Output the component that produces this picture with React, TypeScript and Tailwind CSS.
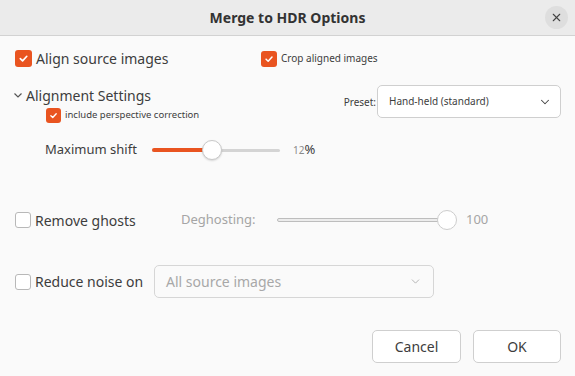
import { ChevronDown, X } from 'lucide-react';

function Check({ on, size = 17 }: { on: boolean; size?: number }) {
  if (on)
    return (
      <div
        className="flex items-center justify-center rounded-[3px] bg-[#e95420] shrink-0"
        style={{ width: size, height: size }}
      >
        <svg width={size - 6} height={size - 6} viewBox="0 0 12 12" fill="none">
          <path d="M2.5 6.2 L5 8.6 L9.6 3.6" stroke="white" strokeWidth="1.8" strokeLinecap="round" strokeLinejoin="round" />
        </svg>
      </div>
    );
  return (
    <div
      className="rounded-[3px] border border-[#b8b8b8] bg-white shrink-0"
      style={{ width: size, height: size }}
    />
  );
}

export default function App() {
  return (
    <div className="w-[575px] h-[376px] bg-[#fafafa] text-[#3d3d3d] font-['Noto_Sans','Open_Sans',sans-serif] overflow-hidden">
      <div className="h-[36px] bg-[#ebebeb] border-b border-[#d2d2d2] flex items-center justify-center relative">
        <span className="text-[14px] font-bold text-[#333]">Merge to HDR Options</span>
        <div className="absolute right-[7px] top-[6px] w-[23px] h-[23px] rounded-full bg-[#dedede] flex items-center justify-center">
          <X className="w-[13px] h-[13px] text-[#444]" strokeWidth={2} />
        </div>
      </div>

      <div className="pl-[15px] pr-[14px]">
        {/* row 1 */}
        <div className="mt-[14px] h-[17px] flex items-center">
          <div className="w-[246px] flex items-center gap-[4px]">
            <Check on />
            <span className="text-[14px]">Align source images</span>
          </div>
          <div className="flex items-center gap-[4px]">
            <Check on size={16} />
            <span className="text-[10px]">Crop aligned images</span>
          </div>
        </div>

        {/* row 2 */}
        <div className="mt-[19px] flex">
          <div className="flex-1">
            <div className="flex items-center h-[18px]">
              <svg width="10" height="10" viewBox="0 0 10 10" className="mr-[3px] -ml-[2px]">
                <path d="M1.5 3.5 L5 7 L8.5 3.5" stroke="#555" strokeWidth="1.2" fill="none" />
              </svg>
              <span className="text-[14px]">Alignment Settings</span>
            </div>
            <div className="mt-[4px] ml-[31px] flex items-center gap-[4px]">
              <Check on size={15} />
              <span className="text-[9.5px]">include perspective correction</span>
            </div>
          </div>
          <div className="flex items-center h-[33px] mt-[-1px]">
            <span className="text-[10px] mr-[1px] mt-[1px]">Preset:</span>
            <div className="w-[184px] h-[33px] rounded-[5px] border border-[#cfcfcf] bg-white flex items-center justify-between pl-[11px] pr-[8px]">
              <span className="text-[10px]">Hand-held (standard)</span>
              <ChevronDown className="w-[14px] h-[14px] text-[#444]" strokeWidth={1.8} />
            </div>
          </div>
        </div>

        {/* max shift */}
        <div className="mt-[16px] h-[22px] flex items-center pl-[30px]">
          <span className="text-[13px] w-[107px]">Maximum shift</span>
          <div className="relative w-[128px] h-[22px] flex items-center">
            <div className="w-full h-[3px] rounded-full bg-[#d4d4d4]" />
            <div className="absolute left-0 top-[9px] w-[60px] h-[4px] rounded-full bg-[#e95420]" />
            <div className="absolute left-[50px] top-[1px] w-[20px] h-[20px] rounded-full bg-white border border-[#c9c9c9] shadow-[0_1px_2px_rgba(0,0,0,0.15)]" />
          </div>
          <span className="ml-[13px] text-[10px] text-[#8a8a8a]">12</span>
          <span className="text-[13px]">%</span>
        </div>

        {/* remove ghosts */}
        <div className="mt-[48px] h-[22px] flex items-center">
          <Check on={false} size={16} />
          <span className="ml-[4px] text-[14px] w-[146px]">Remove ghosts</span>
          <span className="text-[13px] text-[#a5a5a5] w-[96px]">Deghosting:</span>
          <div className="relative w-[180px] h-[22px] flex items-center">
            <div className="w-[172px] h-[4px] rounded-full border border-[#bdbdbd] bg-[#ececec]" />
            <div className="absolute left-[160px] top-[1px] w-[20px] h-[20px] rounded-full bg-white border border-[#cdcdcd]" />
          </div>
          <span className="ml-[9px] text-[13px] text-[#a5a5a5]">100</span>
        </div>

        {/* reduce noise */}
        <div className="mt-[34px] h-[33px] flex items-center">
          <Check on={false} size={16} />
          <span className="ml-[4px] text-[14px] w-[119px]">Reduce noise on</span>
          <div className="w-[280px] h-[33px] rounded-[5px] border border-[#d6d6d6] bg-[#fafafa] flex items-center justify-between pl-[11px] pr-[11px]">
            <span className="text-[14px] text-[#a8a8a8]">All source images</span>
            <ChevronDown className="w-[13px] h-[13px] text-[#aaa]" strokeWidth={1.6} />
          </div>
        </div>

        {/* buttons */}
        <div className="mt-[32px] flex justify-end gap-[12px]">
          <div className="w-[89px] h-[33px] rounded-[5px] border border-[#cfcfcf] bg-white flex items-center justify-center text-[14px]">
            Cancel
          </div>
          <div className="w-[88px] h-[33px] rounded-[5px] border border-[#cfcfcf] bg-white flex items-center justify-center text-[14px]">
            OK
          </div>
        </div>
      </div>
    </div>
  );
}
